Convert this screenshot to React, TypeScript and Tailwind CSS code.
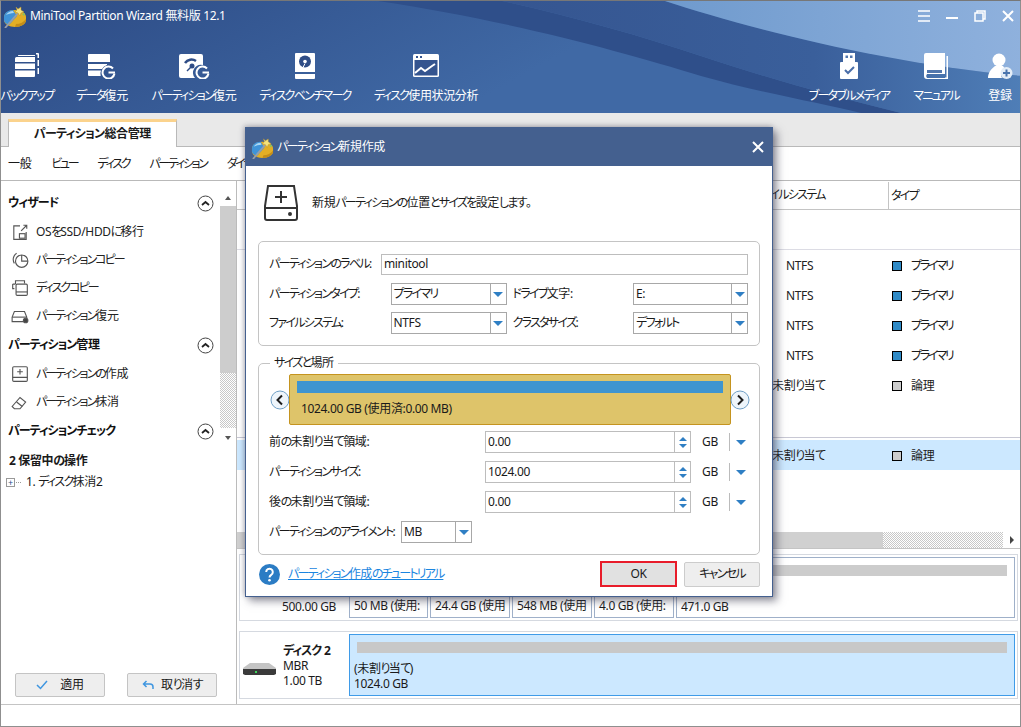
import type { ReactNode } from "react";

// katakana and hiragana are set tighter than kanji, as in the app's UI font
const J = ({ t, k = "tracking-[-1.7px]" }: { t: string; k?: string }) => (
  <>
    {t.split(/([\u3040-\u30ff]+)/).map((s, i) =>
      i % 2 ? (
        <span key={i} className={k}>
          {s}
        </span>
      ) : (
        s
      ),
    )}
  </>
);

const Logo = ({ size = 24 }: { size?: number }) => (
  <svg width={size} height={size} viewBox="0 0 24 24">
    <path d="M1 13c0-4 5-7 11-7s11 3 11 7v3c0 4-5 7-11 7S1 20 1 16z" fill="#e3ae25" />
    <path d="M1 13c0-4 4-7 9-7l4 6-8 9c-3-1-5-3-5-5z" fill="#3f93d8" />
    <path d="M3 11c1-2 4-4 7-4l1 2c-3 0-6 1-8 2z" fill="#a9d6f3" />
    <path d="M13 20c4 0 8-2 10-5v1c0 4-5 7-11 7z" fill="#c48d18" />
    <path d="M2 24L16 8" stroke="#9a9fa8" strokeWidth="1.800" />
    <path d="M13 3l2 2 3-2 0 3 3 2-3 1-1 3-2-3-3-1 2-2z" fill="#f6e27a" stroke="#b58f2c" strokeWidth=".5" />
    <path d="M19 10l3-1-1 3z" fill="#7cc36a" />
  </svg>
);

const white = "#fff";
const IconBackup = () => (
  <svg width="24" height="26" viewBox="0 0 24 26" fill={white}>
    <path d="M3 2h17v1H4a1 1 0 0 0-1 0z" />
    <path d="M1.500 4H20v5H0V5.500A1.500 1.500 0 0 1 1.500 4zM0 10.500h20v5.500H0zM0 17.500h20V23a1 1 0 0 1-1 1H1a1 1 0 0 1-1-1z" />
    <path d="M21 0h2a1 1 0 0 1 1 1v4h-1.500V1.500H21zM22.500 7H24v6h-1.500zM22.500 15H24v6h-1.500z" />
  </svg>
);
const IconData = () => (
  <svg width="28" height="26" viewBox="0 0 28 26" fill={white}>
    <path d="M1 1h20a1 1 0 0 1 1 1v7H0V2a1 1 0 0 1 1-1zM0 11h19v1a8 8 0 0 0-5 4H0zM0 17.500h13a8 8 0 0 0-.3 5.500H1a1 1 0 0 1-1-1z" />
    <path d="M25 15.500a6 6 0 1 0 1.500 5" fill="none" stroke={white} strokeWidth="2" />
    <path d="M20.500 18.500h6.500v2h-6.500z" />
  </svg>
);
const IconPart = () => (
  <svg width="31" height="26" viewBox="0 0 31 26">
    <path d="M2 1h20a2 2 0 0 1 2 2v9a8 8 0 0 0-8 13H2a2 2 0 0 1-2-2V3a2 2 0 0 1 2-2z" fill={white} />
    <path d="M6 10a8 8 0 0 1 11-2" stroke="#2f4d86" strokeWidth="2.500" fill="none" />
    <circle cx="13" cy="13" r="2.500" fill="#2f4d86" />
    <path d="M8 18l4-4" stroke="#2f4d86" strokeWidth="1.500" />
    <path d="M28 15.500a6 6 0 1 0 1.500 5" fill="none" stroke={white} strokeWidth="2" />
    <path d="M23.500 18.500h6.500v2h-6.500z" fill={white} />
  </svg>
);
const IconBench = () => (
  <svg width="20" height="26" viewBox="0 0 20 26">
    <path d="M1 0h18a1 1 0 0 1 1 1v18H0V1a1 1 0 0 1 1-1z" fill={white} />
    <path d="M0 21h20v4a1 1 0 0 1-1 1H1a1 1 0 0 1-1-1z" fill={white} />
    <circle cx="10" cy="8.500" r="6" fill="#2f4d86" />
    <circle cx="10" cy="8.500" r="1.800" fill={white} />
    <path d="M8 14.500l2-4" stroke={white} strokeWidth="1" />
  </svg>
);
const IconUsage = () => (
  <svg width="26" height="24" viewBox="0 0 26 24">
    <rect width="26" height="23" rx="1.500" fill={white} />
    <rect x="1.500" y="6" width="23" height="15.500" fill="#34548f" />
    <rect x="3" y="2" width="2" height="2" fill="#34548f" />
    <rect x="7" y="2" width="2" height="2" fill="#34548f" />
    <path d="M2 19l6-5 4 3 7-5 3-2" stroke={white} strokeWidth="2" fill="none" />
  </svg>
);
const IconUsb = () => (
  <svg width="18" height="26" viewBox="0 0 18 26">
    <path d="M3 0h12v9H3z" fill={white} />
    <path d="M5.500 2.500h2.500v2.500H5.500zM10 2.500h2.500v2.500H10z" fill="#5277ad" />
    <path d="M1 9h16a1 1 0 0 1 1 1v15a1 1 0 0 1-1 1H1a1 1 0 0 1-1-1V10a1 1 0 0 1 1-1z" fill={white} />
    <path d="M5 17l3 3 6-6" stroke="#4a6ea8" strokeWidth="2" fill="none" />
  </svg>
);
const IconBook = () => (
  <svg width="24" height="26" viewBox="0 0 24 26">
    <path d="M2 0h19v21H3a3 3 0 0 0 0 4h18v1H3a3 3 0 0 1-3-3V2a2 2 0 0 1 2-2z" fill={white} />
    <path d="M22.500 3h1.500v23h-3v-1.500h1.500z" fill={white} />
    <path d="M3 17h15v3H3z" fill="#5277ad" />
  </svg>
);
const IconUser = () => (
  <svg width="25" height="26" viewBox="0 0 25 26">
    <circle cx="11" cy="7" r="6.500" fill={white} />
    <path d="M7 13h8l2 3a7 7 0 0 0-3 9H0c0-5 3-9 7-12z" fill={white} />
    <circle cx="18.500" cy="20" r="6" fill="#e4edf7" />
    <path d="M18.500 16.500v7M15 20h7" stroke="#4a75ae" strokeWidth="2" />
  </svg>
);

const Chevron = () => (
  <svg width="17" height="17" viewBox="0 0 17 17" className="shrink-0">
    <circle cx="8.500" cy="8.500" r="7.500" fill="#fff" stroke="#444" />
    <path d="M5 10l3.500-3 3.500 3" stroke="#222" strokeWidth="1.800" fill="none" />
  </svg>
);

const sideIcons: Record<string, ReactNode> = {
  os: (
    <g fill="none" stroke="#555">
      <path d="M8 2.500H2.500v12h11V8" />
      <path d="M9 7l5-5M11 2h3v3" />
      <rect x="7.500" y="9.500" width="5" height="4" />
    </g>
  ),
  copy: (
    <g fill="none" stroke="#555">
      <path d="M5 2a6.500 6.500 0 0 0-2 9" />
      <circle cx="9.500" cy="9" r="5.500" />
      <path d="M9.500 3.500V9H15" />
    </g>
  ),
  disk: (
    <g fill="none" stroke="#555">
      <path d="M4 4.500V1.500h8V4" />
      <path d="M1.500 4.500H4M1.500 4.500v4H3" />
      <rect x="4.500" y="4.500" width="10" height="10" rx="1" />
      <path d="M4.500 11.500h10" />
    </g>
  ),
  rec: (
    <g fill="none" stroke="#555">
      <path d="M1 9l2-5h9l2 5v4H1z" />
      <path d="M1 9h13" />
      <circle cx="13" cy="12" r="2" fill="#444" />
    </g>
  ),
  create: (
    <g fill="none" stroke="#555">
      <rect x="1.500" y="1.500" width="13" height="13" rx="1" />
      <path d="M1.500 11h13M8 3.500v5M5.500 6h5" />
    </g>
  ),
  erase: (
    <g fill="none" stroke="#555">
      <path d="M1 12l7-8 5 4-5 6H3z" />
      <path d="M5 8l5 4" />
    </g>
  ),
};

const SideItem = ({ icon, label }: { icon: string; label: string }) => (
  <div className="h-[28px] flex items-center pl-[10px] gap-[7px] text-[12px] text-[#222] whitespace-nowrap">
    <svg width="18" height="18" viewBox="0 0 16 16" className="shrink-0">
      {sideIcons[icon]}
    </svg>
    <span>
      <J t={label} k="tracking-[-2px]" />
    </span>
  </div>
);

const SideHead = ({ label, className = "" }: { label: string; className?: string }) => (
  <div className={`h-[28px] flex items-center justify-between pl-[7px] pr-[5px] text-[12px] font-bold text-[#111] ${className}`}>
    <span>
      <J t={label} k="tracking-[-1px]" />
    </span>
    <Chevron />
  </div>
);

const ToolItem = ({ icon, label, w }: { icon: ReactNode; label: string; w: string }) => (
  <div className={`${w} h-full flex flex-col items-center shrink-0`}>
    <div className="h-[28px] flex items-center justify-center">{icon}</div>
    <div className="mt-[8px] text-[12px] leading-[16px] text-white whitespace-nowrap">
      <J t={label} />
    </div>
  </div>
);

const Arrow = () => <span className="w-0 h-0 border-x-[5px] border-x-transparent border-t-[5px] border-t-[#2f7fc4]" />;

const Select = ({ value, w }: { value: string; w: string }) => (
  <div className={`${w} h-[22px] border border-[#a8a8a8] flex items-center bg-white shrink-0`}>
    <span className="flex-1 pl-[2px] text-[12px]">
      <J t={value} />
    </span>
    <span className="w-[16px] h-full border-l border-[#a8a8a8] flex items-center justify-center">
      <Arrow />
    </span>
  </div>
);

const SizeRow = ({ label, value }: { label: string; value: string }) => (
  <div className="h-[30px] flex items-center text-[12px]">
    <span className="w-[226px] pl-[10px] shrink-0">
      <J t={label} />
    </span>
    <div className="w-[206px] h-[22px] border border-[#bdbdbd] flex items-center shrink-0">
      <span className="flex-1 pl-[2px]">{value}</span>
      <span className="w-[16px] h-full border-l border-[#bdbdbd] flex flex-col items-center justify-center gap-[3px]">
        <span className="w-0 h-0 border-x-[4px] border-x-transparent border-b-[4px] border-b-[#2f7fc4]" />
        <span className="w-0 h-0 border-x-[4px] border-x-transparent border-t-[4px] border-t-[#2f7fc4]" />
      </span>
    </div>
    <span className="w-[38px] pl-[11px] shrink-0">GB</span>
    <span className="h-[18px] border-l border-[#bbb] w-[22px] flex items-center justify-center">
      <Arrow />
    </span>
  </div>
);

const Round = ({ dir }: { dir: "l" | "r" }) => (
  <svg width="20" height="20" viewBox="0 0 20 20" className="shrink-0">
    <circle cx="10" cy="10" r="9" fill="#eef5fb" stroke="#6f9fc6" />
    <path d={dir === "l" ? "M12 5.500L7.500 10l4.500 4.500" : "M8 5.500l4.500 4.500L8 14.500"} stroke="#1d1d1d" strokeWidth="2" fill="none" />
  </svg>
);

const Dialog = () => (
  <div className="absolute left-[244px] top-[126px] w-[528px] h-[470px] bg-white border border-[#44608f] shadow-[4px_4px_8px_rgba(60,60,80,0.55),-1px_-1px_5px_rgba(60,60,80,0.35)] flex flex-col whitespace-nowrap">
    <div className="h-[38px] bg-[#44608f] flex items-center pl-[5px] pr-[8px] text-white text-[12px] shrink-0">
      <Logo size={23} />
      <span className="ml-[3px] flex-1">
        <J t="パーティション新規作成" />
      </span>
      <svg width="12" height="12" viewBox="0 0 12 12">
        <path d="M1 1l10 10M11 1L1 11" stroke="#fff" strokeWidth="2" />
      </svg>
    </div>
    <div className="h-[75px] flex items-center pl-[17px] gap-[13px] text-[12px] shrink-0 pt-[1px] pb-[2px]">
      <svg width="36" height="38" viewBox="0 0 36 38" fill="none" stroke="#333" strokeWidth="2">
        <path d="M5 2h26l3 20v12a2 2 0 0 1-2 2H4a2 2 0 0 1-2-2V22z" />
        <path d="M2 24h32M18 7v12M12 13h12" />
        <circle cx="27" cy="30" r="1" fill="#333" />
      </svg>
      <span>
        <J t="新規パーティションの位置とサイズを設定します。" />
      </span>
    </div>
    <div className="mx-[12px] h-[105px] border border-[#c4c4c4] rounded-[5px] pt-[11px] pl-[10px] pr-[11px] text-[12px] shrink-0">
      <div className="flex items-center h-[22px]">
        <span className="w-[112px] shrink-0">
          <J t="パーティションのラベル:" />
        </span>
        <div className="flex-1 h-[21px] border border-[#bdbdbd] pl-[2px] flex items-center">minitool</div>
      </div>
      <div className="flex items-center h-[22px] mt-[8px]">
        <span className="w-[122px]">
          <J t="パーティションタイプ:" />
        </span>
        <Select value="プライマリ" w="w-[116px]" />
        <span className="w-[127px] pl-[6px]">
          <J t="ドライブ文字:" />
        </span>
        <Select value="E:" w="w-[115px]" />
      </div>
      <div className="flex items-center h-[22px] mt-[7px]">
        <span className="w-[122px]">
          <J t="ファイルシステム:" />
        </span>
        <Select value="NTFS" w="w-[116px]" />
        <span className="w-[127px] pl-[6px]">
          <J t="クラスタサイズ:" />
        </span>
        <Select value="デフォルト" w="w-[115px]" />
      </div>
    </div>
    <div className="relative mx-[12px] mt-[17px] h-[192px] border border-[#c4c4c4] rounded-[5px] shrink-0">
      <span className="absolute left-[11px] -top-[9px] bg-white px-[4px] text-[12px] leading-[16px]">
        <J t="サイズと場所" />
      </span>
      <div className="flex items-center pl-[11px] pt-[10px]">
        <Round dir="l" />
        <div className="w-[442px] h-[51px] -mx-[1px] bg-[#dec46a] border border-[#c5941f] rounded-[2px] px-[7px] pt-[6px] shrink-0">
          <div className="h-[12px] bg-[#3f95d0]" />
          <div className="mt-[8px] pl-[4px] text-[12px] leading-[16px]">1024.00 GB (使用済:0.00 MB)</div>
        </div>
        <Round dir="r" />
      </div>
      <div className="mt-[2px]">
        <SizeRow label="前の未割り当て領域:" value="0.00" />
        <SizeRow label="パーティションサイズ:" value="1024.00" />
        <SizeRow label="後の未割り当て領域:" value="0.00" />
        <div className="h-[30px] flex items-center text-[12px] pl-[10px]">
          <span className="w-[132px] shrink-0">
            <J t="パーティションのアライメント:" />
          </span>
          <Select value="MB" w="w-[71px]" />
        </div>
      </div>
    </div>
    <div className="flex items-center pl-[13px] pr-[12px] mt-[6px] h-[26px] text-[12px]">
      <svg width="21" height="21" viewBox="0 0 21 21" className="shrink-0">
        <circle cx="10.500" cy="10.500" r="10.500" fill="#2b7cc4" />
        <path d="M7.200 8a3.300 3.300 0 1 1 5 2.800c-1.200.8-1.700 1.300-1.700 2.700" stroke="#fff" strokeWidth="2" fill="none" />
        <circle cx="10.500" cy="16.300" r="1.300" fill="#fff" />
      </svg>
      <span className="ml-[8px] flex-1 text-[#1c86e0] underline">
        <J t="パーティション作成のチュートリアル" k="tracking-[-1.8px]" />
      </span>
      <button className="w-[77px] h-[26px] bg-[#e1e1e1] border-2 border-[#e81c2a]">OK</button>
      <button className="ml-[7px] w-[76px] h-[25px] bg-[#eeeeee] border border-[#cccccc] rounded-[2px]">
        <J t="キャンセル" />
      </button>
    </div>
  </div>
);

const Row = ({ fs, type, color, left, selected }: { fs: string; type: string; color: string; left: string; selected?: boolean }) => (
  <div className={`h-[30px] pt-[1px] flex items-center text-[12px] shrink-0 ${selected ? "bg-[#cce8ff]" : ""}`}>
    <span className={`${left} text-[#222] whitespace-nowrap text-left`}>
      <J t={fs} />
    </span>
    <span className={`w-[10px] h-[10px] border border-black ${color} shrink-0`} />
    <span className="ml-[9px]">
      <J t={type} k="tracking-[-2.2px]" />
    </span>
  </div>
);

const parts = [
  { w: "w-[79px]", t: "50 MB (使用:" },
  { w: "w-[80px]", t: "24.4 GB (使用" },
  { w: "w-[80px]", t: "548 MB (使用" },
  { w: "w-[80px]", t: "4.0 GB (使用:" },
];

const dither = "bg-[repeating-conic-gradient(#c8c8c8_0_25%,#fff_0_50%)] bg-[length:2px_2px]";

export default function App() {
  return (
    <div className="relative w-[1021px] h-[727px] overflow-hidden bg-white border border-[#8f8f8f] border-t-[#777] [font-family:'Noto_Sans','Noto_Sans_CJK_JP',sans-serif] [font-feature-settings:'palt'] tracking-[-0.35px] text-[#1a1a1a]">
      <header className="relative h-[112px] overflow-hidden">
        <svg className="absolute inset-0" width="1021" height="112" viewBox="0 0 1021 112">
          <defs>
            <linearGradient id="base" x1="0" x2="1" y1="0" y2="0.2">
              <stop offset="0" stopColor="#2c4a84" />
              <stop offset="0.62" stopColor="#4069a5" />
              <stop offset="1" stopColor="#4069a5" />
            </linearGradient>
            <linearGradient id="lt" x1="0" x2="1" y1="0" y2="0">
              <stop offset="0" stopColor="#6f9acd" />
              <stop offset="1" stopColor="#8fb1dd" />
            </linearGradient>
            <linearGradient id="mid" x1="0" x2="1" y1="0" y2="0">
              <stop offset="0" stopColor="#355590" />
              <stop offset="0.6" stopColor="#3a5f9b" />
              <stop offset="1" stopColor="#4f7eb7" />
            </linearGradient>
          </defs>
          <rect width="1021" height="112" fill="url(#base)" />
          <path d="M377 0C500 18 620 50 700 75 760 92 820 102 860 112H900C830 95 760 75 700 55 640 35 570 15 501 0z" fill="#2f4f8a" />
          <path d="M501 0H664C740 25 880 62 1021 75V112H900C830 95 760 75 700 55 640 35 570 15 501 0z" fill="url(#mid)" />
          <path d="M664 0H1021V75C880 62 740 25 664 0z" fill="url(#lt)" />
        </svg>
        <div className="relative h-[30px] flex items-center pl-[2px]">
          <Logo size={24} />
          <span className="ml-[3px] text-[12px] text-white">MiniTool Partition Wizard 無料版 12.1</span>
          <div className="ml-auto flex items-center gap-[16px] pr-[6px]">
            <svg width="12" height="12" viewBox="0 0 12 12" stroke="#fff" strokeWidth="1.500"><path d="M0 1h12M0 6h12M0 11h12" /></svg>
            <svg width="12" height="12" viewBox="0 0 12 12" stroke="#fff" strokeWidth="2"><path d="M0 8h12" /></svg>
            <svg width="12" height="12" viewBox="0 0 12 12" fill="none" stroke="#fff" strokeWidth="1.500"><path d="M3 3V1h8v8H9" /><rect x="1" y="3" width="8" height="8" /></svg>
            <svg width="12" height="12" viewBox="0 0 12 12" stroke="#fff" strokeWidth="2"><path d="M1 1l10 10M11 1L1 11" /></svg>
          </div>
        </div>
        <div className="relative flex h-[82px] pt-[21px]">
          <ToolItem icon={<IconBackup />} label="バックアップ" w="w-[54px] -ml-[1px]" />
          <ToolItem icon={<IconData />} label="データ復元" w="w-[52px] ml-[22px]" />
          <ToolItem icon={<IconPart />} label="パーティション復元" w="w-[84px] ml-[24px]" />
          <ToolItem icon={<IconBench />} label="ディスクベンチマーク" w="w-[90px] ml-[24px]" />
          <ToolItem icon={<IconUsage />} label="ディスク使用状況分析" w="w-[106px] ml-[23px]" />
          <ToolItem icon={<IconUsb />} label="ブータブルメディア" w="w-[80px] ml-auto" />
          <ToolItem icon={<IconBook />} label="マニュアル" w="w-[46px] ml-[24px]" />
          <ToolItem icon={<IconUser />} label="登録" w="w-[24px] ml-[29px] mr-[8px]" />
        </div>
      </header>
      <div className="h-[34px] bg-[#e9e9e9] border-b border-[#b9b9b9] pl-[7px] pt-[6px] shrink-0">
        <div className="w-[169px] h-[28px] bg-white border-x border-[#b9b9b9] border-t-[3px] border-t-[#fbd38d] text-center text-[12px] font-bold leading-[24px]">
          <J t="パーティション総合管理" k="tracking-[-0.7px]" />
        </div>
      </div>
      <nav className="h-[34px] border-b border-[#b9b9b9] flex items-center gap-[20px] pl-[7px] text-[12px]">
        <span>一般</span>
        <span><J t="ビュー" k="tracking-[-2.3px]" /></span>
        <span><J t="ディスク" k="tracking-[-2.3px]" /></span>
        <span><J t="パーティション" k="tracking-[-2.3px]" /></span>
        <span><J t="ダイナミックディスク" k="tracking-[-2.3px]" /></span>
      </nav>
      <div className="flex h-[524px] border-b border-[#c4c4c4]">
        <aside className="w-[236px] shrink-0 border-r border-[#bbb] flex flex-col">
          <div className="flex flex-1">
            <div className="w-[218px] pt-[8px]">
              <SideHead label="ウィザード" className="mb-[1px]" />
              <SideItem icon="os" label="OSをSSD/HDDに移行" />
              <SideItem icon="copy" label="パーティションコピー" />
              <SideItem icon="disk" label="ディスクコピー" />
              <SideItem icon="rec" label="パーティション復元" />
              <SideHead label="パーティション管理" className="mt-[1px] mb-[1px]" />
              <SideItem icon="create" label="パーティションの作成" />
              <SideItem icon="erase" label="パーティション抹消" />
              <SideHead label="パーティションチェック" className="mt-[1px]" />
              <div className="h-[28px] mt-[2px] flex items-center pl-[8px] text-[12px] font-bold">
                <span><J t="2 保留中の操作" k="tracking-[-1px]" /></span>
              </div>
              <div className="h-[14px] flex items-center pl-[5px] text-[12px]">
                <span className="w-[9px] h-[9px] border border-[#999] flex items-center justify-center text-[9px] leading-none text-[#2a4a8a]">+</span>
                <span className="w-[5px] ml-[1px] border-t border-dotted border-[#999]" />
                <span className="ml-[5px]"><J t="1. ディスク抹消2" /></span>
              </div>
            </div>
            <div className="w-[16px] ml-[1px] mt-[8px] h-[258px] flex flex-col items-center">
              <div className="h-[17px] flex items-center">
                <span className="w-0 h-0 border-x-[3px] border-x-transparent border-b-[4px] border-b-[#555]" />
              </div>
              <div className="w-full h-[167px] bg-[#cdcdcd]" />
              <div className={`w-full h-[55px] ${dither}`} />
              <div className="h-[19px] flex items-center">
                <span className="w-0 h-0 border-x-[3px] border-x-transparent border-t-[4px] border-t-[#555]" />
              </div>
            </div>
          </div>
          <div className="flex pl-[14px] gap-[22px] pb-[7px] text-[12px]">
            <button className="w-[90px] h-[24px] bg-[#eee] border border-[#c4c4c4] rounded-[2px] flex items-center justify-center gap-[12px]">
              <svg width="12" height="10" viewBox="0 0 12 10" fill="none" stroke="#3f96e0" strokeWidth="1.500"><path d="M1 5l3.500 3.500L11 1" /></svg>
              適用
            </button>
            <button className="w-[90px] h-[24px] bg-[#eee] border border-[#c4c4c4] rounded-[2px] flex items-center justify-center gap-[7px]">
              <svg width="12" height="10" viewBox="0 0 12 10" fill="none" stroke="#3f96e0" strokeWidth="1.500"><path d="M4.500 1L1.500 4l3 3M1.500 4H8a3 3 0 0 1 3 3v2" /></svg>
              <span><J t="取り消す" /></span>
            </button>
          </div>
        </aside>
        <main className="flex-1 min-w-0 flex flex-col pb-[5px]">
          <div className="h-[29px] pt-[2px] border-b border-[#c4c4c4] flex items-center text-[12px] shrink-0">
            <span className="w-[652px] pl-[516px] h-[27px] -mt-[2px] flex items-center border-r border-[#c4c4c4] whitespace-nowrap">
              <span><J t="ファイルシステム" /></span>
            </span>
            <span className="pl-[2px]"><J t="タイプ" /></span>
          </div>
          <div className="h-[40px] border-b border-[#dcdce4] shrink-0" />
          <Row fs="NTFS" type="プライマリ" color="bg-[#2f8ac6]" left="w-[655px] pl-[549px]" />
          <Row fs="NTFS" type="プライマリ" color="bg-[#2f8ac6]" left="w-[655px] pl-[549px]" />
          <Row fs="NTFS" type="プライマリ" color="bg-[#2f8ac6]" left="w-[655px] pl-[549px]" />
          <Row fs="NTFS" type="プライマリ" color="bg-[#2f8ac6]" left="w-[655px] pl-[549px]" />
          <Row fs="未割り当て" type="論理" color="bg-[#cccccc]" left="w-[655px] pl-[535px]" />
          <div className="h-[38px] border-b border-[#c8c8d4] shrink-0" />
          <div className="h-[2px] shrink-0" />
          <Row fs="未割り当て" type="論理" color="bg-[#cccccc]" left="w-[655px] pl-[535px]" selected />
          <div className="flex-1" />
          <div className="h-[17px] flex items-center shrink-0 border-b border-[#c4c4c4]">
            <div className="w-[646px] h-full bg-[#d0d0d0]" />
            <div className={`flex-1 h-full ${dither}`} />
            <div className="w-[17px] flex items-center justify-center">
              <span className="w-0 h-0 border-y-[4px] border-y-transparent border-l-[4px] border-l-[#444]" />
            </div>
          </div>
          <div className="mt-[5px] mx-[2px] h-[67px] border border-[#d5d9e0] flex shrink-0 p-[2px]">
            <div className="w-[107px] flex flex-col justify-end pl-[40px] pb-[4px] text-[12px] leading-[15px] whitespace-nowrap">500.00 GB</div>
            <div className="flex gap-[2px] flex-1">
              {parts.map((p) => (
                <div key={p.t} className={`${p.w} border border-[#9fb0c9] flex items-end pl-[4px] pb-[4px] text-[12px] leading-[15px] whitespace-nowrap overflow-hidden`}>
                  {p.t}
                </div>
              ))}
              <div className="flex-1 border border-[#9fb0c9] flex flex-col px-[7px] pt-[7px] text-[12px]">
                <div className="h-[11px] bg-[#cccccc]" />
                <div className="mt-auto pb-[3px] -ml-[3px] leading-[15px]">471.0 GB</div>
              </div>
            </div>
          </div>
          <div className="mt-[10px] mx-[2px] h-[68px] border border-[#d5d9e0] flex shrink-0 p-[2px]">
            <div className="w-[107px] flex text-[12px] leading-[15px]">
              <svg width="33" height="14" viewBox="0 0 33 14" className="ml-[1px] mt-[28px] shrink-0">
                <path d="M0 6l7-5h19l7 5v3H0z" fill="#c4c4c4" />
                <path d="M0 7h33v5l-2 1H2l-2-1z" fill="#3a3a3a" />
                <rect x="12" y="9" width="2" height="2" fill="#3dd65a" />
              </svg>
              <div className="ml-[7px] pt-[9px]">
                <div className="font-bold"><J t="ディスク 2" k="tracking-[-1px]" /></div>
                <div>MBR</div>
                <div>1.00 TB</div>
              </div>
            </div>
            <div className="flex-1 bg-[#cce8ff] border border-[#3f9be8] px-[7px] pt-[7px] flex flex-col text-[12px] leading-[15px]">
              <div className="h-[11px] bg-[#c8c8c8] shrink-0" />
              <div className="mt-[8px] -ml-[3px]"><J t="(未割り当て)" /></div>
              <div className="-ml-[3px]">1024.0 GB</div>
            </div>
          </div>
        </main>
      </div>
      <Dialog />
    </div>
  );
}
